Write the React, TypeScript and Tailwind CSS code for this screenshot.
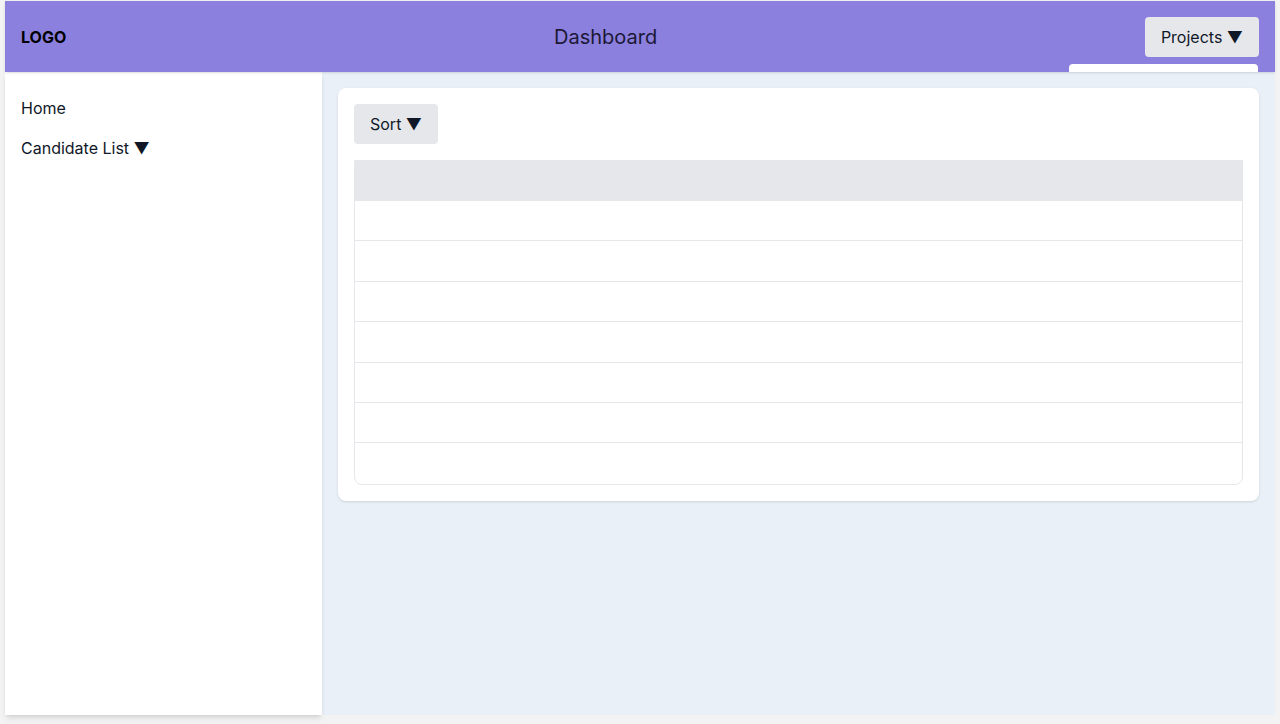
import React from "react";

const rows = Array.from({ length: 7 }, (_, i) => i);

const App = () => {
  return (
    <div
      className="h-[724px] w-full bg-[#f3f3f3] pt-px px-[5px] overflow-hidden"
      style={{ fontFamily: "Inter, 'Noto Sans', sans-serif" }}
    >
      <div className="flex flex-col h-[714px]">
        {/* header */}
        <header className="relative h-[71px] bg-[#8b80de] flex items-center justify-between px-4 shadow-sm z-10">
          <div className="font-bold text-base text-black">LOGO</div>
          <h1 className="text-xl text-[#1c1836]">Dashboard</h1>
          <button className="bg-gray-200 rounded px-4 py-2 text-base text-gray-900">
            Projects ▼
          </button>
          {/* dropdown peeking out under the button */}
          <div className="absolute right-[17px] top-[63px] w-[189px] h-[8px] bg-white rounded-t" />
        </header>

        <div className="flex flex-1 min-h-0">
          {/* sidebar */}
          <aside className="w-[317px] shrink-0 bg-white shadow-md p-4 z-0">
            <ul className="flex flex-col text-base text-gray-900">
              <li className="py-2">Home</li>
              <li className="py-2">Candidate List ▼</li>
            </ul>
          </aside>

          {/* main */}
          <main className="flex-1 bg-[#e9f0f7] p-4">
            <div className="bg-white rounded-lg shadow p-4">
              <button className="bg-gray-200 rounded px-4 py-2 text-base text-gray-900">
                Sort ▼
              </button>
              <div className="mt-4 border border-gray-200 rounded-b-lg overflow-hidden">
                <div className="h-10 bg-gray-200" />
                {rows.map((r) => (
                  <div
                    key={r}
                    className="h-[40.4px] border-b border-gray-200 last:border-b-0"
                  />
                ))}
              </div>
            </div>
          </main>
        </div>
      </div>
    </div>
  );
};

export default App;
